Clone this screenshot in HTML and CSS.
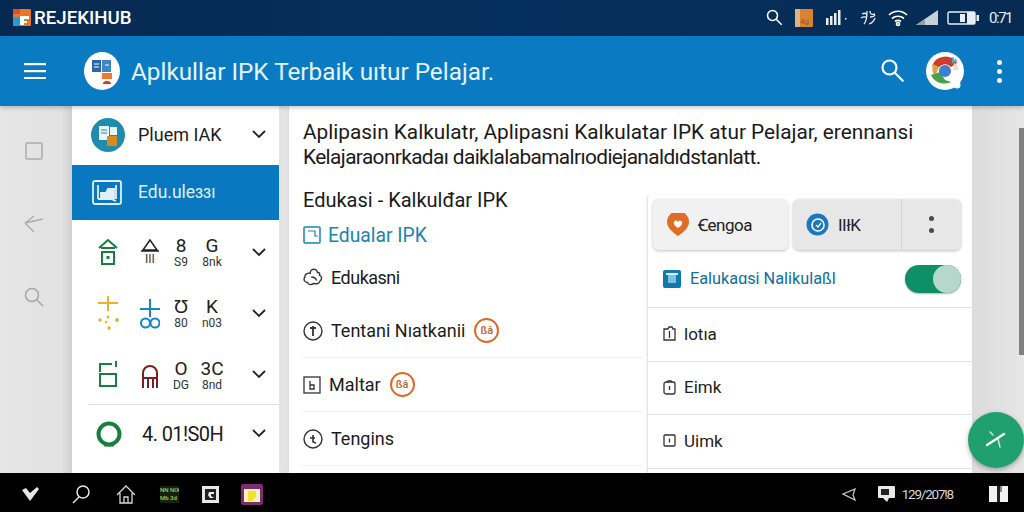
FILE: index.html
```html
<!DOCTYPE html>
<html lang="id">
<head>
<meta charset="UTF-8">
<meta name="viewport" content="width=device-width, initial-scale=1.0">
<title>RejekiHub</title>
<link rel="stylesheet" href="styles.css">
</head>
<body>
<header class="status-bar">
    <div class="brand">
        <svg width="18" height="17" viewBox="0 0 18 17"><rect width="18" height="17" rx="1" fill="#e8772e"/><rect y="8" width="8" height="9" fill="#2a9ad6"/><rect x="0" y="0" width="7" height="5" fill="#d8502c"/><path d="M7 16V7h9v3h-5v2h3v2h-3v2z" fill="#fff"/></svg>
        <span>REJEKIHUB</span>
    </div>
    <div class="status-icons">
        <svg width="17" height="17" viewBox="0 0 17 17" fill="none" stroke="#fff" stroke-width="1.6"><circle cx="6.5" cy="6.5" r="5"/><path d="M10.2 10.2l5.5 5.5"/></svg>
        <svg class="st-4g" width="18" height="18" viewBox="0 0 18 18"><rect width="18" height="18" rx="1" fill="#d9822f"/><rect width="5" height="18" fill="#e4b083"/><text x="5" y="15" font-size="8" fill="#8a5a2a" font-family="Roboto">4g</text></svg>
        <svg class="st-bars" width="22" height="16" viewBox="0 0 22 16" fill="#e9eef2"><rect x="0" y="8" width="2.5" height="7"/><rect x="4" y="6" width="2.5" height="9"/><rect x="8" y="3" width="2.5" height="12"/><rect x="12" y="0" width="2.5" height="15"/><rect x="19" y="8" width="1.5" height="1.5"/></svg>
        <svg class="st-squig" width="17" height="17" viewBox="0 0 17 17" fill="none" stroke="#e9eef2" stroke-width="1.3"><path d="M2 5c2-1 4-1 5 1M1 9c3-2 5-1 6 0M4 15c2-2 3-6 3-13M10 2c0 3 1 4 5 3M10 8c2 0 4 0 5-2M9 15c3-1 5-3 6-6"/></svg>
        <svg class="st-wifi" width="20" height="18" viewBox="0 0 20 18" fill="none" stroke="#fff" stroke-width="1.7"><path d="M1 6c5-5 13-5 18 0M4 9.500c3.500-3 8.500-3 12 0M7 12.500c2-1.500 4-1.500 6 0"/><circle cx="10" cy="15" r="1.500"/></svg>
        <svg class="st-tri" width="23" height="16" viewBox="0 0 23 16"><path d="M0 15L22 0v15z" fill="#c7d0d6"/><path d="M0 15l9-6v6z" fill="#8fa0ac"/></svg>
        <svg class="st-batt" width="33" height="14" viewBox="0 0 33 14" fill="none"><rect x="1" y="1" width="27" height="12" rx="1.500" stroke="#e9eef2" stroke-width="1.400"/><rect x="13" y="3" width="5" height="8" fill="#e9eef2"/><rect x="20" y="1" width="8" height="12" fill="#e9eef2"/><rect x="29.500" y="4" width="2.500" height="6" fill="#e9eef2"/></svg>
        <span class="st-time">0:71</span>
    </div>
</header>

<div class="app-bar">
    <svg class="menu-icon" width="22" height="16" viewBox="0 0 22 16" fill="#fff"><rect width="22" height="2.200" y="0"/><rect width="22" height="2.200" y="7"/><rect width="22" height="2.200" y="14"/></svg>
    <div class="app-logo">
        <svg width="36" height="38" viewBox="0 0 36 38"><rect x="8" y="8" width="9" height="12" fill="#2769a8"/><rect x="18" y="8" width="9" height="12" fill="#3d87c4"/><path d="M10 12h5M10 15h5M21 13h4" stroke="#fff" stroke-width="1"/><rect x="18" y="21" width="10" height="6" fill="#ed7a30"/><path d="M19 32c0-3 3-3 4-3s4 0 4 3z" fill="#d2401f"/></svg>
    </div>
    <h1 class="app-title">Aplkullar IPK Terbaik uıtur Pelajar.</h1>
    <svg class="app-search" width="24" height="24" viewBox="0 0 24 24" fill="none" stroke="#fff" stroke-width="2.200"><circle cx="9.500" cy="9.500" r="7"/><path d="M14.800 14.800l8 8" stroke-linecap="round"/></svg>
    <svg class="app-chrome" width="40" height="42" viewBox="0 0 40 42"><circle cx="20" cy="20" r="19" fill="#fff"/><path d="M7 15a14 14 0 0 1 25-3l-6 4a8 8 0 0 0-12 0z" fill="#cf3b2f"/><path d="M8 13l6 3-4 9c-3-3-3-8-2-12z" fill="#e2a23a"/><path d="M6 24l9-3 5 8 6 2c-6 3-16 2-20-7z" fill="#4ba24a"/><circle cx="20" cy="20" r="6" fill="#3d7fd0"/><path d="M31 8l-4 4M28 6v4h4" stroke="#39bfe0" stroke-width="1.500" fill="none"/><path d="M29 12c3 1 4 4 4 7h-5z" fill="#f7dcc0"/><circle cx="32" cy="34" r="3.500" fill="#fff"/></svg>
    <div class="dots"><i></i><i></i><i></i></div>
</div>

<main class="main">
    <div class="rail">
        <svg class="rail-square" width="18" height="18" viewBox="0 0 18 18" fill="none" stroke="#aaa" stroke-width="1.500"><rect x="1" y="1" width="16" height="16" rx="1.500"/></svg>
        <svg class="rail-plane" width="20" height="20" viewBox="0 0 20 20" fill="none" stroke="#aaa" stroke-width="1.300"><path d="M1 10L19 6M1 10l9-7M1 10l9 9"/></svg>
        <svg class="rail-search" width="20" height="20" viewBox="0 0 20 20" fill="none" stroke="#a6a6a6" stroke-width="1.500"><circle cx="8" cy="8" r="6.500"/><path d="M13 13l6 6"/></svg>
    </div>

    <nav class="sidebar">
        <div class="side-row row-first">
            <svg class="side-logo" width="34" height="34" viewBox="0 0 34 34"><circle cx="17" cy="17" r="17" fill="#1f8cac"/><rect x="8" y="8" width="10" height="14" fill="#e8f4f7"/><rect x="19" y="9" width="7" height="8" fill="#e8f4f7"/><rect x="16" y="18" width="10" height="10" fill="#d88a1e"/><path d="M10 12h6M10 15h6" stroke="#1f8cac"/></svg>
            <span class="side-label">Pluem IAK</span>
            <svg class="chev" width="14" height="9" viewBox="0 0 14 9" fill="none" stroke="#222" stroke-width="1.800"><path d="M1 1l6 6 6-6"/></svg>
        </div>
        <div class="side-row row-active">
            <svg class="side-icon" width="30" height="26" viewBox="0 0 30 26" fill="none" stroke="#dff0fa" stroke-width="1.800"><rect x="1" y="1" width="28" height="23" rx="2"/><path d="M6 5v14M24 5v14M6 19h13l5 2"/><path d="M9 13h5l2-4h6v9H9z" fill="#dff0fa"/></svg>
            <span class="side-label">Edu.uleɜɜı</span>
        </div>
        <div class="side-row">
            <svg class="side-icon" width="20" height="28" viewBox="0 0 20 28" fill="none" stroke="#17803f" stroke-width="2"><path d="M1 10L10 2l9 8M3 10h14M4 14h12v12H4z"/><rect x="8.500" y="18" width="3" height="3" fill="#17803f" stroke="none"/></svg>
            <div class="minis">
                <div class="mini"><svg width="18" height="13" viewBox="0 0 18 13" fill="none" stroke="#222" stroke-width="1.500"><path d="M9 1L2 11h14zM0 12h18"/></svg><small>III</small></div>
                <div class="mini"><b>8</b><small>S9</small></div>
                <div class="mini"><b>G</b><small>8nk</small></div>
            </div>
            <svg class="chev" width="14" height="9" viewBox="0 0 14 9" fill="none" stroke="#222" stroke-width="1.800"><path d="M1 1l6 6 6-6"/></svg>
        </div>
        <div class="side-row">
            <svg class="side-icon" width="22" height="34" viewBox="0 0 22 34" fill="#e8b130"><path d="M0 6h20v2H0zM9 0h2v15H9z"/><circle cx="2" cy="24" r="1.700"/><circle cx="10" cy="21" r="1.500"/><circle cx="11" cy="32" r="1.800"/><circle cx="19" cy="24" r="2"/><circle cx="8" cy="26" r="1.300"/></svg>
            <div class="minis">
                <div class="mini"><svg width="20" height="30" viewBox="0 0 20 30" fill="none" stroke="#1784c4" stroke-width="2"><path d="M0 10h20M10 0v18"/><circle cx="5.500" cy="24" r="4.500"/><circle cx="15" cy="24" r="4.500"/></svg></div>
                <div class="mini"><b>Ʊ</b><small>80</small></div>
                <div class="mini"><b>K</b><small>n03</small></div>
            </div>
            <svg class="chev" width="14" height="9" viewBox="0 0 14 9" fill="none" stroke="#222" stroke-width="1.800"><path d="M1 1l6 6 6-6"/></svg>
        </div>
        <div class="side-row row-ruled">
            <svg class="side-icon" width="20" height="26" viewBox="0 0 20 26" fill="none" stroke="#17803f" stroke-width="2"><path d="M2 11V3h12M18 0v6M2 13h16v12H2z"/></svg>
            <div class="minis">
                <div class="mini"><svg width="16" height="24" viewBox="0 0 16 24" fill="none" stroke="#7d1f22" stroke-width="2"><path d="M1 24V9a7 7 0 0 1 14 0v15M1 14h14M6 14v10M11 14v10"/></svg></div>
                <div class="mini"><b>O</b><small>DG</small></div>
                <div class="mini"><b>3C</b><small>8nd</small></div>
            </div>
            <svg class="chev" width="14" height="9" viewBox="0 0 14 9" fill="none" stroke="#222" stroke-width="1.800"><path d="M1 1l6 6 6-6"/></svg>
        </div>
        <div class="side-row row-last">
            <svg class="side-icon" width="26" height="27" viewBox="0 0 26 27" fill="none" stroke="#17803f" stroke-width="4"><circle cx="13" cy="13" r="10.500"/><path d="M8 24h10" stroke-width="3"/></svg>
            <span class="side-label side-label-big">4. 01!S0H</span>
            <svg class="chev" width="14" height="9" viewBox="0 0 14 9" fill="none" stroke="#222" stroke-width="1.800"><path d="M1 1l6 6 6-6"/></svg>
        </div>
    </nav>

    <section class="content">
        <p class="lead">Aplipasin Kalkulatr, Aplipasni Kalkulatar IPK atur Pelajar, erennansi<br><span class="lead-tight">Kelajaraonrkadaı daiklalabamalrıodiejanaldıdstanlatt.</span></p>
        <h2 class="sub-title">Edukasi - Kalkulđar IPK</h2>
        <div class="blue-link">
            <svg width="18" height="18" viewBox="0 0 18 18" fill="none" stroke="#1a85ad" stroke-width="1.500"><rect x="1" y="1" width="16" height="16" rx="1"/><path d="M5 5h7v5h3" stroke-width="1.200"/></svg>
            <span>Edualar IPK</span>
        </div>
        <div class="list-row row-plain">
            <svg width="20" height="20" viewBox="0 0 22 20" fill="none" stroke="#333" stroke-width="1.500"><path d="M8 6a4 4 0 0 1 8-1c2 0 3 1 2 3 3 1 3 5 1 6-1 3-4 4-7 3-3 2-6 2-7-1-3 0-5-3-3-6 0-3 3-5 6-4zM9 10c3 0 5 1 6 4"/></svg>
            <span class="tight">Edukasni</span>
        </div>
        <div class="list-row row-line">
            <svg width="20" height="20" viewBox="0 0 20 20" fill="none" stroke="#333" stroke-width="1.400"><circle cx="10" cy="10" r="9"/><path d="M7 7h6M10 5v10" stroke-width="1.800"/></svg>
            <span>Tentani Nıatkanii</span>
            <em class="badge">ßâ</em>
        </div>
        <div class="list-row row-line">
            <svg width="18" height="18" viewBox="0 0 18 18" fill="none" stroke="#333" stroke-width="1.300"><rect x="1" y="1" width="16" height="16"/><path d="M7 5v8h4v-4H7"/></svg>
            <span>Maltar</span>
            <em class="badge">ßâ</em>
        </div>
        <div class="list-row row-line">
            <svg width="20" height="20" viewBox="0 0 20 20" fill="none" stroke="#333" stroke-width="1.400"><circle cx="10" cy="10" r="9"/><path d="M10 6v7l3 1M7 9h5" stroke-width="1.600"/></svg>
            <span>Tengins</span>
        </div>
    </section>

    <div class="gutter"><div class="scroll-thumb"></div></div>

    <aside class="panel">
        <div class="panel-buttons">
            <div class="pbtn pbtn-left">
                <svg width="22" height="23" viewBox="0 0 22 23"><path d="M11 23C4 18 0 14 0 9a9 9 0 0 1 22 0c0 5-4 9-11 14z" fill="#e06d26"/><path d="M11 15c-3-2-5-4-4-6s3-2 4 0c1-2 3-2 4 0s-1 4-4 6z" fill="#fff"/></svg>
                <span class="tight">Ꞓengoa</span>
            </div>
            <div class="pbtn pbtn-right">
                <div class="pbtn-main">
                    <svg width="23" height="23" viewBox="0 0 23 23" fill="none"><circle cx="11.500" cy="11.500" r="11" fill="#1a78c0"/><circle cx="12" cy="12" r="6" stroke="#fff" stroke-width="1.600"/><path d="M10 12l2 2 3-4" stroke="#fff" stroke-width="1.300"/></svg>
                    <span class="tight">IIłK</span>
                </div>
                <div class="pbtn-more"><i></i><i></i></div>
            </div>
        </div>
        <div class="toggle-row">
            <svg width="18" height="18" viewBox="0 0 18 18"><rect width="18" height="18" rx="2" fill="#0f78ad"/><rect x="5" y="5" width="8" height="8" fill="#7fc0de"/><rect x="3" y="3" width="12" height="2" fill="#d6edf7"/></svg>
            <span>Ealukaɑsi Nalikulaßl</span>
            <div class="toggle"><div class="knob"></div></div>
        </div>
        <div class="panel-row">
            <svg width="13" height="15" viewBox="0 0 13 15" fill="none" stroke="#333" stroke-width="1.300"><path d="M1 14V3h4l1-2h3l1 2h2v11zM6.500 5v7"/></svg>
            <span>lotıa</span>
        </div>
        <div class="panel-row">
            <svg width="13" height="15" viewBox="0 0 13 15" fill="none" stroke="#333" stroke-width="1.300"><rect x="1" y="2" width="11" height="12" rx="2"/><path d="M4 2l1-1h3l1 1M6.500 6v4" /></svg>
            <span>Eimk</span>
        </div>
        <div class="panel-row">
            <svg width="13" height="13" viewBox="0 0 13 13" fill="none" stroke="#333" stroke-width="1.300"><rect x="1" y="1" width="11" height="11" rx="1"/><path d="M6.500 4.500v4"/></svg>
            <span>Uimk</span>
        </div>
    </aside>

    <button class="fab">
        <svg width="20" height="18" viewBox="0 0 20 18" fill="none" stroke="#fff" stroke-linecap="round" stroke-width="2.400"><path d="M1 14L18 3"/><path d="M12 8l2 8M4 1l3 3" stroke-width="1.400" stroke-opacity=".8"/></svg>
    </button>
</main>

<footer class="task-bar">
    <div class="task-left">
        <svg width="17" height="14" viewBox="0 0 17 14"><path d="M0 3l4-2 4 5 7-6 2 2-9 12z" fill="#e6e6e6"/></svg>
        <svg class="tk-search" width="18" height="19" viewBox="0 0 18 19" fill="none" stroke="#e6e6e6" stroke-width="1.500"><circle cx="11" cy="7" r="6"/><path d="M7 12l-6 6"/></svg>
        <svg class="tk-home" width="18" height="19" viewBox="0 0 18 19" fill="none" stroke="#d8d8d8" stroke-width="1.300"><path d="M0 10L9 1l9 9M3 8v10h12V8M7 18v-6h4v6"/></svg>
        <div class="task-green"><span>NN NIX</span><span>Mb 3d</span></div>
        <svg class="tk-white" width="17" height="17" viewBox="0 0 17 17"><rect width="17" height="17" fill="#e8e8e8"/><rect x="3" y="3" width="11" height="11" fill="#222"/><path d="M7 6h5v2H9v2l3 2H8L6 9z" fill="#eee"/></svg>
        <svg class="tk-purple" width="22" height="21" viewBox="0 0 22 21"><rect width="22" height="21" rx="2" fill="#7d2d6e"/><rect x="3" y="5" width="16" height="13" fill="#f5f0c8"/><path d="M7 7h8v6l-4 4H7z" fill="#f1e326"/></svg>
    </div>
    <div class="task-right">
        <svg class="tk-share" width="15" height="13" viewBox="0 0 15 13" fill="none" stroke="#cfcfcf" stroke-width="1.200"><path d="M13 1L1 6l12 6-2-5z"/></svg>
        <svg class="tk-mon" width="17" height="16" viewBox="0 0 17 16"><rect width="17" height="12" rx="1" fill="#e8e8e8"/><rect x="3" y="3" width="8" height="6" fill="#222"/><path d="M5 12h6l-2 4z" fill="#e8e8e8"/></svg>
        <span class="tk-date">129/207!8</span>
        <svg class="tk-door" width="19" height="16" viewBox="0 0 19 16"><rect width="19" height="16" fill="#f2f2f2"/><rect x="8" y="0" width="3" height="16" fill="#222"/><rect x="11" y="0" width="2" height="6" fill="#888"/></svg>
    </div>
</footer>
</body>
</html>
```

FILE: styles.css
```css
* {
    box-sizing: border-box;
}

body {
    font-family: Roboto, sans-serif;
    margin: 0;
    width: 1024px;
    height: 512px;
    overflow: hidden;
    display: flex;
    flex-direction: column;
    background-color: #000;
}

/* top status bar */
.status-bar {
    height: 36px;
    background: linear-gradient(90deg, #07294f, #04305f 50%, #062b53);
    display: flex;
    align-items: center;
    justify-content: space-between;
    padding: 0 12px 1px 13px;
    flex-shrink: 0;
}

.brand {
    display: flex;
    align-items: center;
    gap: 3px;
    color: #fff;
    font-size: 18.7px;
    font-weight: 500;
}

.status-icons {
    display: flex;
    align-items: center;
    color: #e9eef2;
}

.st-4g { margin-left: 12px; }
.st-bars { margin-left: 13px; }
.st-squig { margin-left: 12px; }
.st-wifi { margin-left: 11px; }
.st-tri { margin-left: 8px; }
.st-batt { margin-left: 8px; }

.st-time {
    margin-left: 9px;
    font-size: 15px;
    letter-spacing: -1.5px;
}

/* blue app bar */
.app-bar {
    height: 70px;
    background-color: #0a7ac2;
    display: flex;
    align-items: center;
    flex-shrink: 0;
    padding-left: 24px;
    box-shadow: 0 2px 4px rgba(0, 0, 0, 0.2);
    position: relative;
    z-index: 2;
}

.app-logo {
    width: 36px;
    height: 38px;
    border-radius: 50%;
    background-color: #fff;
    margin-left: 38px;
}

.app-title {
    margin: 0 0 0 11px;
    color: #e4f4fd;
    font-size: 24.3px;
    font-weight: 400;
    width: 749px;
    white-space: nowrap;
}

.app-search { margin-top: -2px; }

.app-chrome {
    margin-left: 21px;
    margin-top: 2px;
}

.dots {
    margin-left: 32px;
    display: flex;
    flex-direction: column;
    gap: 4px;
}

.dots i {
    display: block;
    width: 5px;
    height: 5px;
    border-radius: 50%;
    background-color: #f2f8fc;
}

/* main area */
.main {
    flex: 1;
    display: flex;
    position: relative;
    background-color: #e4e4e4;
    overflow: hidden;
}

.rail {
    width: 72px;
    display: flex;
    flex-direction: column;
    align-items: center;
    flex-shrink: 0;
    padding: 36px 4px 0 0;
    background: linear-gradient(90deg, #e6e6e6, #e2e2e2 85%, #cfcfcf);
}

.rail-plane { margin-top: 53px; }
.rail-search { margin-top: 54px; }

.sidebar {
    width: 207px;
    background-color: #fff;
    display: flex;
    flex-direction: column;
    flex-shrink: 0;
}

.side-row {
    height: 61px;
    display: flex;
    align-items: center;
    padding-left: 26px;
    position: relative;
    flex-shrink: 0;
}

.side-logo { margin-left: -7px; flex-shrink: 0; }

.side-icon {
    flex-shrink: 0;
    margin-top: 3px;
}

.row-first {
    height: 59px;
    padding-bottom: 2px;
}

.row-first .side-label { margin-left: 13px; }

.row-active {
    height: 55px;
    background-color: #0a78c0;
    color: #dff0fa;
    padding-left: 20px;
}

.row-active .side-icon { margin-top: 0; }

.row-active .side-label {
    margin-left: 16px;
    font-size: 17.5px;
    color: #dff0fa;
}

.row-ruled {
    height: 63px;
    padding-bottom: 2px;
}

.row-ruled::after {
    content: "";
    position: absolute;
    left: 17px;
    right: 0;
    bottom: 0;
    height: 1px;
    background-color: #dcdcdc;
}

.row-last {
    padding: 0 0 10px 24px;
    flex: 1;
}

.row-last .side-icon { margin-top: 0; }

.side-label {
    font-size: 18px;
    color: #1b1b1b;
    white-space: nowrap;
}

.side-label-big {
    font-size: 20px;
    letter-spacing: -0.6px;
    margin-left: 20px;
}

.chev {
    position: absolute;
    right: 13px;
    top: 50%;
    margin-top: -3px;
}

.row-first .chev { margin-top: -6px; }
.row-ruled .chev { margin-top: -4px; }
.row-last .chev { margin-top: -10px; }

.minis {
    position: absolute;
    left: 68px;
    top: 4px;
    bottom: 0;
    display: flex;
    align-items: center;
    gap: 11px;
}

.mini {
    width: 20px;
    display: flex;
    flex-direction: column;
    align-items: center;
    color: #222;
}

.mini b {
    font-weight: 400;
    font-size: 19px;
    line-height: 19px;
}

.mini small {
    font-size: 12px;
    line-height: 15px;
    color: #333;
    white-space: nowrap;
}

/* center content */
.content {
    width: 683px;
    margin-left: 10px;
    background-color: #fff;
    display: flex;
    flex-direction: column;
    flex-shrink: 0;
    padding-left: 14px;
    box-shadow: 0 0 3px rgba(0, 0, 0, 0.08);
}

.lead {
    margin: 14px 0 0;
    font-size: 20.8px;
    line-height: 25px;
    color: #1a1a1a;
    white-space: nowrap;
}

.lead-tight { letter-spacing: -0.6px; }

.sub-title {
    margin: 17px 0 0;
    font-size: 20px;
    font-weight: 400;
    line-height: 26px;
    color: #1a1a1a;
}

.blue-link {
    display: flex;
    align-items: center;
    gap: 7px;
    margin-top: 9px;
    color: #1a85ad;
    font-size: 19.3px;
    height: 26px;
}

.list-row {
    width: 339px;
    display: flex;
    align-items: center;
    gap: 8px;
    font-size: 18px;
    color: #1c1c1c;
    height: 54px;
    border-bottom: 1px solid #eee;
    flex-shrink: 0;
}

.row-plain {
    border-bottom: none;
    height: 44px;
    margin: 7px 0 5px;
}

.tight { letter-spacing: -0.5px; }

.badge {
    width: 25px;
    height: 25px;
    border: 2.500px solid #dd6a2b;
    border-radius: 50%;
    color: #c9602a;
    font-size: 11px;
    font-style: normal;
    font-weight: 500;
    display: flex;
    align-items: center;
    justify-content: center;
    margin-left: 1px;
}

.gutter {
    flex: 1;
    position: relative;
    background: linear-gradient(90deg, #dcdcdc, #e6e6e6);
}

.scroll-thumb {
    position: absolute;
    top: 22px;
    right: 0;
    width: 5px;
    height: 227px;
    background-color: #808080;
}

/* floating panel over the content */
.panel {
    position: absolute;
    left: 647px;
    top: 89px;
    width: 325px;
    bottom: 0;
    background-color: #fff;
    border-left: 1px solid #e4e4e4;
    border-top-left-radius: 4px;
    box-shadow: -1px 0 3px rgba(0, 0, 0, 0.05);
    display: flex;
    flex-direction: column;
}

.panel-buttons {
    display: flex;
    gap: 5px;
    padding: 4px 11px 0 5px;
    height: 55px;
}

.pbtn {
    border-radius: 6px;
    height: 51px;
    display: flex;
    align-items: center;
    box-shadow: 0 1px 3px rgba(0, 0, 0, 0.25);
    color: #222;
    font-size: 17px;
}

.pbtn-left {
    width: 135px;
    background-color: #f1f1f1;
    padding-left: 14px;
    gap: 9px;
}

.pbtn-right {
    width: 168px;
    background-color: #e7e7e7;
}

.pbtn-main {
    width: 109px;
    height: 100%;
    display: flex;
    align-items: center;
    gap: 9px;
    padding-left: 13px;
    border-right: 1px solid #d4d4d4;
}

.pbtn-more {
    flex: 1;
    display: flex;
    flex-direction: column;
    align-items: center;
    gap: 7px;
}

.pbtn-more i {
    display: block;
    width: 5px;
    height: 5px;
    border-radius: 50%;
    background-color: #4a4a4a;
}

.toggle-row {
    height: 58px;
    display: flex;
    align-items: center;
    padding-left: 15px;
    gap: 9px;
    color: #0f6f9f;
    font-size: 16.3px;
    border-bottom: 1px solid #e4e4e4;
    position: relative;
    flex-shrink: 0;
}

.toggle {
    position: absolute;
    left: 257px;
    top: 15px;
    width: 56px;
    height: 28px;
    border-radius: 14px;
    background-color: #0e8f68;
    box-shadow: 0 1px 2px rgba(0, 0, 0, 0.3);
}

.knob {
    position: absolute;
    right: 0;
    top: 0;
    width: 28px;
    height: 28px;
    border-radius: 50%;
    background-color: #b5d8cd;
}

.panel-row {
    height: 53.500px;
    display: flex;
    align-items: center;
    gap: 8px;
    padding-left: 15px;
    padding-bottom: 1px;
    font-size: 17px;
    color: #222;
    border-bottom: 1px solid #e4e4e4;
    flex-shrink: 0;
}

.fab {
    position: absolute;
    left: 968px;
    top: 306px;
    width: 56px;
    height: 56px;
    border: none;
    border-radius: 50%;
    background-color: #21a06f;
    box-shadow: 0 2px 5px rgba(0, 0, 0, 0.3);
    display: flex;
    align-items: center;
    justify-content: center;
    padding: 0;
}

/* bottom bar */
.task-bar {
    height: 39px;
    background-color: #000;
    display: flex;
    align-items: center;
    justify-content: space-between;
    padding: 3px 16px 0 22px;
    flex-shrink: 0;
}

.task-left {
    display: flex;
    align-items: center;
}

.tk-search { margin-left: 33px; }
.tk-home { margin-left: 27px; }
.tk-white { margin-left: 23px; }
.tk-purple { margin-left: 22px; }

.task-green {
    width: 19px;
    height: 17px;
    margin-left: 25px;
    background-color: #17210f;
    color: #b6e07c;
    font-size: 6px;
    line-height: 8px;
    display: flex;
    flex-direction: column;
    overflow: hidden;
    white-space: nowrap;
}

.task-right {
    display: flex;
    align-items: center;
    color: #d8d8d8;
}

.tk-mon { margin-left: 21px; }

.tk-date {
    margin-left: 7px;
    font-size: 13.500px;
    letter-spacing: -1.200px;
}

.tk-door { margin-left: 36px; }
```
